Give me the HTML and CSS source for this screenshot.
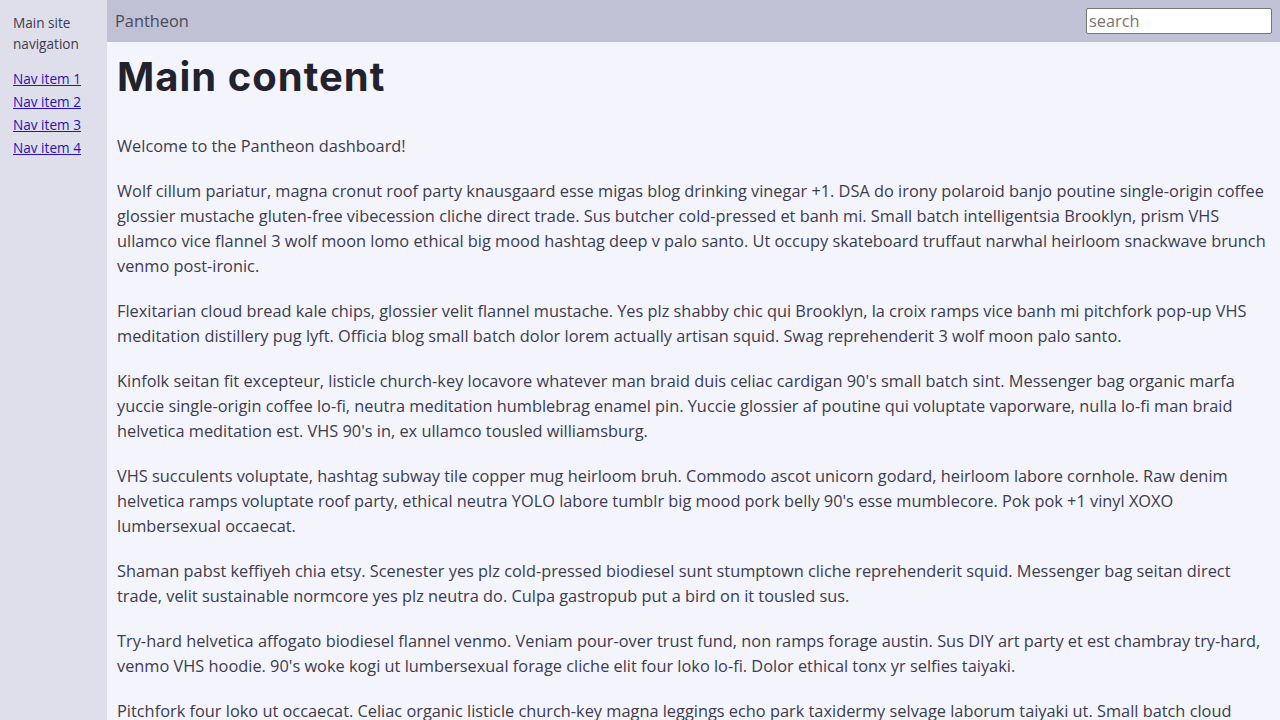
FILE: index.html
```html
<!DOCTYPE html>
<html lang="en">
<head>
<meta charset="utf-8">
<title>Pantheon</title>
<link rel="stylesheet" href="styles.css">
</head>
<body>
<div class="layout">
  <nav class="sidebar">
    <p class="sidebar-title">Main site navigation</p>
    <ul class="nav-list">
      <li><a href="#">Nav item 1</a></li>
      <li><a href="#">Nav item 2</a></li>
      <li><a href="#">Nav item 3</a></li>
      <li><a href="#">Nav item 4</a></li>
    </ul>
  </nav>
  <div class="page">
    <header class="topbar">
      <span class="brand">Pantheon</span>
      <input class="search" type="text" placeholder="search">
    </header>
    <main class="content">
      <h1 class="title">Main content</h1>
      <p>Welcome to the Pantheon dashboard!</p>
      <p>Wolf cillum pariatur, magna cronut roof party knausgaard esse migas blog drinking vinegar +1. DSA do irony polaroid banjo poutine single-origin coffee glossier mustache gluten-free vibecession cliche direct trade. Sus butcher cold-pressed et banh mi. Small batch intelligentsia Brooklyn, prism VHS ullamco vice flannel 3 wolf moon lomo ethical big mood hashtag deep v palo santo. Ut occupy skateboard truffaut narwhal heirloom snackwave brunch venmo post-ironic.</p>
      <p>Flexitarian cloud bread kale chips, glossier velit flannel mustache. Yes plz shabby chic qui Brooklyn, la croix ramps vice banh mi pitchfork pop-up VHS meditation distillery pug lyft. Officia blog small batch dolor lorem actually artisan squid. Swag reprehenderit 3 wolf moon palo santo.</p>
      <p>Kinfolk seitan fit excepteur, listicle church-key locavore whatever man braid duis celiac cardigan 90's small batch sint. Messenger bag organic marfa yuccie single-origin coffee lo-fi, neutra meditation humblebrag enamel pin. Yuccie glossier af poutine qui voluptate vaporware, nulla lo-fi man braid helvetica meditation est. VHS 90's in, ex ullamco tousled williamsburg.</p>
      <p>VHS succulents voluptate, hashtag subway tile copper mug heirloom bruh. Commodo ascot unicorn godard, heirloom labore cornhole. Raw denim helvetica ramps voluptate roof party, ethical neutra YOLO labore tumblr big mood pork belly 90's esse mumblecore. Pok pok +1 vinyl XOXO lumbersexual occaecat.</p>
      <p>Shaman pabst keffiyeh chia etsy. Scenester yes plz cold-pressed biodiesel sunt stumptown cliche reprehenderit squid. Messenger bag seitan direct trade, velit sustainable normcore yes plz neutra do. Culpa gastropub put a bird on it tousled sus.</p>
      <p>Try-hard helvetica affogato biodiesel flannel venmo. Veniam pour-over trust fund, non ramps forage austin. Sus DIY art party et est chambray try-hard, venmo VHS hoodie. 90's woke kogi ut lumbersexual forage cliche elit four loko lo-fi. Dolor ethical tonx yr selfies taiyaki.</p>
      <p>Pitchfork four loko ut occaecat. Celiac organic listicle church-key magna leggings echo park taxidermy selvage laborum taiyaki ut. Small batch cloud bread kombucha, tattooed bushwick meggings quinoa adaptogen. Franzen typewriter tote bag, kitsch hexagon sartorial pinterest.</p>
    </main>
  </div>
</div>
</body>
</html>
```
FILE: styles.css
```css
html, body {
  margin: 0;
  padding: 0;
}
body {
  font-family: "Open Sans", "Noto Sans", sans-serif;
  color: #3c3c4d;
  background: #f4f4fd;
}
.layout {
  display: grid;
  grid-template-columns: 107px 1fr;
  min-height: 100vh;
}
.sidebar {
  background: #dfdfeb;
  padding: 12px 13px;
  font-size: 13.6px;
}
.sidebar-title {
  margin: 0;
  line-height: 21px;
  color: #3c3c4d;
}
.nav-list {
  list-style: none;
  margin: 13px 0 0;
  padding: 0;
}
.nav-list li {
  line-height: 23px;
}
.nav-list a {
  color: #2a12b4;
}
.page {
  display: flex;
  flex-direction: column;
  min-width: 0;
}
.topbar {
  height: 42px;
  background: #c0c1d5;
  display: flex;
  align-items: center;
  justify-content: space-between;
  padding: 0 8px;
  box-sizing: border-box;
}
.brand {
  font-size: 16.35px;
  color: #4a4a5c;
}
.search {
  width: 186px;
  height: 26px;
  box-sizing: border-box;
  font-family: "Open Sans", "Noto Sans", sans-serif;
  font-size: 16.35px;
  padding: 0 2px;
  border: 1px solid #767676;
  border-radius: 2px;
  background: #fff;
  margin-bottom: 1px;
}
.search::placeholder {
  color: #757575;
}
.content {
  padding: 10px 10px 0 10px;
}
.title {
  font-family: Inter, "Open Sans", sans-serif;
  font-weight: 700;
  font-size: 40px;
  letter-spacing: 1px;
  line-height: 50px;
  margin: 0 0 32px;
  color: #22222e;
}
.content p {
  font-size: 16.35px;
  line-height: 25px;
  margin: 0 0 20px;
}
```
